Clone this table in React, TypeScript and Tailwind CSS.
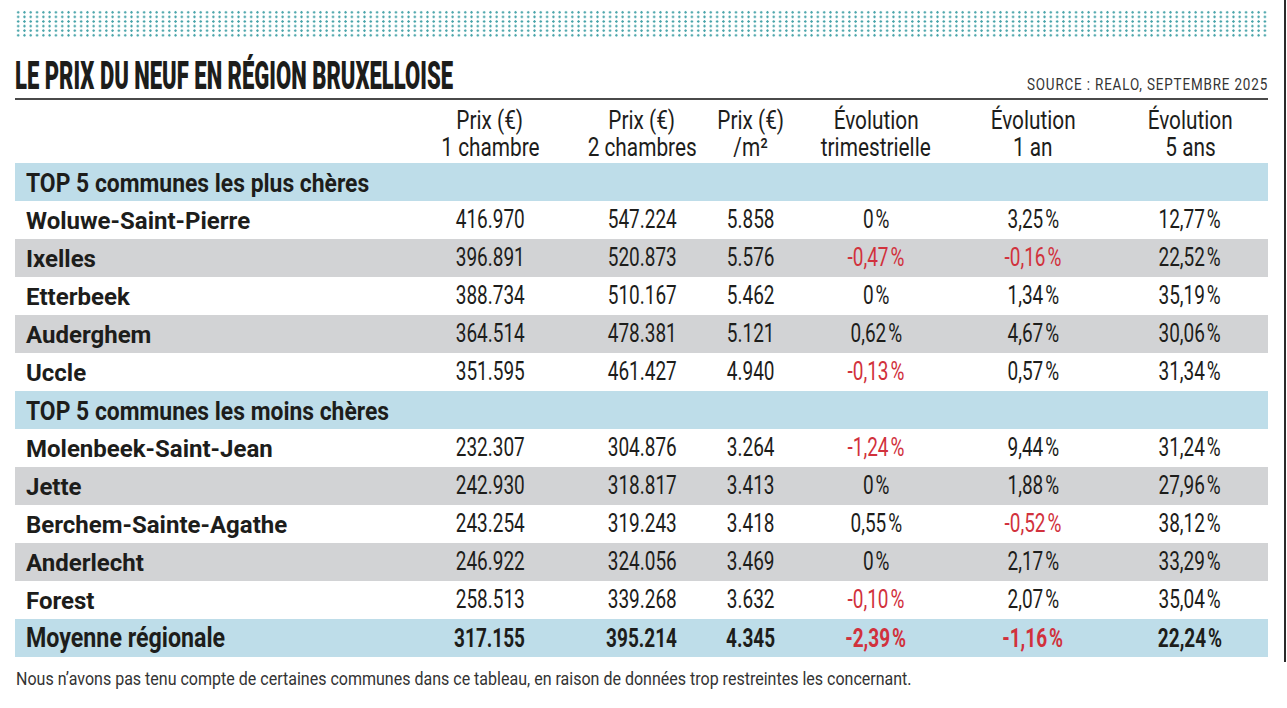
import React from "react";

type Row = {
  name: string;
  p1: string;
  p2: string;
  m2: string;
  tri: string;
  an1: string;
  an5: string;
};

const cols = "grid grid-cols-[385px_180px_124px_94px_156px_158px_156px]";

const top: Row[] = [
  { name: "Woluwe-Saint-Pierre", p1: "416.970", p2: "547.224", m2: "5.858", tri: "0%", an1: "3,25%", an5: "12,77%" },
  { name: "Ixelles", p1: "396.891", p2: "520.873", m2: "5.576", tri: "-0,47%", an1: "-0,16%", an5: "22,52%" },
  { name: "Etterbeek", p1: "388.734", p2: "510.167", m2: "5.462", tri: "0%", an1: "1,34%", an5: "35,19%" },
  { name: "Auderghem", p1: "364.514", p2: "478.381", m2: "5.121", tri: "0,62%", an1: "4,67%", an5: "30,06%" },
  { name: "Uccle", p1: "351.595", p2: "461.427", m2: "4.940", tri: "-0,13%", an1: "0,57%", an5: "31,34%" },
];

const bottom: Row[] = [
  { name: "Molenbeek-Saint-Jean", p1: "232.307", p2: "304.876", m2: "3.264", tri: "-1,24%", an1: "9,44%", an5: "31,24%" },
  { name: "Jette", p1: "242.930", p2: "318.817", m2: "3.413", tri: "0%", an1: "1,88%", an5: "27,96%" },
  { name: "Berchem-Sainte-Agathe", p1: "243.254", p2: "319.243", m2: "3.418", tri: "0,55%", an1: "-0,52%", an5: "38,12%" },
  { name: "Anderlecht", p1: "246.922", p2: "324.056", m2: "3.469", tri: "0%", an1: "2,17%", an5: "33,29%" },
  { name: "Forest", p1: "258.513", p2: "339.268", m2: "3.632", tri: "-0,10%", an1: "2,07%", an5: "35,04%" },
];

const avg: Row = { name: "Moyenne régionale", p1: "317.155", p2: "395.214", m2: "4.345", tri: "-2,39%", an1: "-1,16%", an5: "22,24%" };

// small gap before the percent sign, as in the print layout
const pct = (v: string) => v.replace("%", "\u200A%");

function Num({ v, bold }: { v: string; bold?: boolean }) {
  const neg = v.startsWith("-");
  return (
    <div className="text-center">
      <span
        className={`inline-block scale-x-[0.73] text-[26px] leading-none whitespace-nowrap ${bold ? "font-bold" : "font-normal"} ${
          neg ? "text-[#d1313c]" : "text-[#1d1d1b]"
        }`}
      >
        {pct(v)}
      </span>
    </div>
  );
}

function DataRow({ row, shade }: { row: Row; shade: boolean }) {
  return (
    <div className={`${cols} h-[38px] items-center ${shade ? "bg-[#d2d3d5]" : "bg-white"}`}>
      <div className="pl-[11px] pt-[2px] text-[24px] font-bold leading-none text-[#1d1d1b]">{row.name}</div>
      <Num v={row.p1} />
      <Num v={row.p2} />
      <Num v={row.m2} />
      <Num v={row.tri} />
      <Num v={row.an1} />
      <Num v={row.an5} />
    </div>
  );
}

function Section({ title }: { title: string }) {
  return (
    <div className="flex h-[38px] items-center bg-[#bedde9] pl-[11px] pt-[2px]">
      <span className="inline-block origin-left scale-x-[0.88] text-[26px] font-bold leading-none text-[#1d1d1b] whitespace-nowrap">
        {title}
      </span>
    </div>
  );
}

function Head({ a, b }: { a: string; b: string }) {
  return (
    <div className="flex flex-col items-center gap-[3px] text-[26px] leading-[24px] text-[#1d1d1b]">
      <span className="inline-block scale-x-[0.8] whitespace-nowrap">{a}</span>
      <span className="inline-block scale-x-[0.8] whitespace-nowrap">{b}</span>
    </div>
  );
}

export default function App() {
  return (
    <div className="relative h-[708px] w-[1287px] overflow-hidden bg-white font-['Roboto',sans-serif]">
      <div className="pl-[15px] pr-[19px] pt-[10px]">
        {/* dotted band */}
        <div className="h-[27px] bg-[radial-gradient(circle,#46a3a8_0.9px,transparent_1.4px)] bg-[length:6.3px_4.6px]" />

        <div className="flex h-[61px] items-end justify-between">
          <span className="mb-[3px] inline-block origin-bottom-left scale-x-[0.58] text-[38px] font-black uppercase leading-none whitespace-nowrap text-[#1d1d1b]">
            Le prix du neuf en région bruxelloise
          </span>
          <span className="mb-[5px] inline-block origin-bottom-right scale-x-[0.84] text-[16px] uppercase leading-none tracking-[1px] whitespace-nowrap text-[#333]">
            Source : Realo, septembre 2025
          </span>
        </div>
        <div className="h-[2px] bg-[#4a4a4a]" />

        <div className={`${cols} h-[63px] pt-[8px]`}>
          <div />
          <Head a="Prix (€)" b="1 chambre" />
          <Head a="Prix (€)" b="2 chambres" />
          <Head a="Prix (€)" b="/m²" />
          <Head a="Évolution" b="trimestrielle" />
          <Head a="Évolution" b="1 an" />
          <Head a="Évolution" b="5 ans" />
        </div>

        <Section title="TOP 5 communes les plus chères" />
        {top.map((r, i) => (
          <DataRow key={r.name} row={r} shade={i % 2 === 1} />
        ))}
        <Section title="TOP 5 communes les moins chères" />
        {bottom.map((r, i) => (
          <DataRow key={r.name} row={r} shade={i % 2 === 1} />
        ))}

        <div className={`${cols} h-[38px] items-center bg-[#bedde9] pt-[2px]`}>
          <div className="pl-[11px]">
            <span className="inline-block origin-left scale-x-[0.86] text-[27px] font-bold leading-none whitespace-nowrap text-[#1d1d1b]">
              {avg.name}
            </span>
          </div>
          <Num v={avg.p1} bold />
          <Num v={avg.p2} bold />
          <Num v={avg.m2} bold />
          <Num v={avg.tri} bold />
          <Num v={avg.an1} bold />
          <Num v={avg.an5} bold />
        </div>

        <p className="mt-[11px] pl-[1px]">
          <span className="inline-block origin-left scale-x-[0.89] text-[18px] leading-none whitespace-nowrap text-[#333]">
            Nous n’avons pas tenu compte de certaines communes dans ce tableau, en raison de données trop restreintes les concernant.
          </span>
        </p>
      </div>
      <div className="absolute right-[1px] top-0 h-[662px] w-[2px] bg-[#2a2a2a]" />
    </div>
  );
}
